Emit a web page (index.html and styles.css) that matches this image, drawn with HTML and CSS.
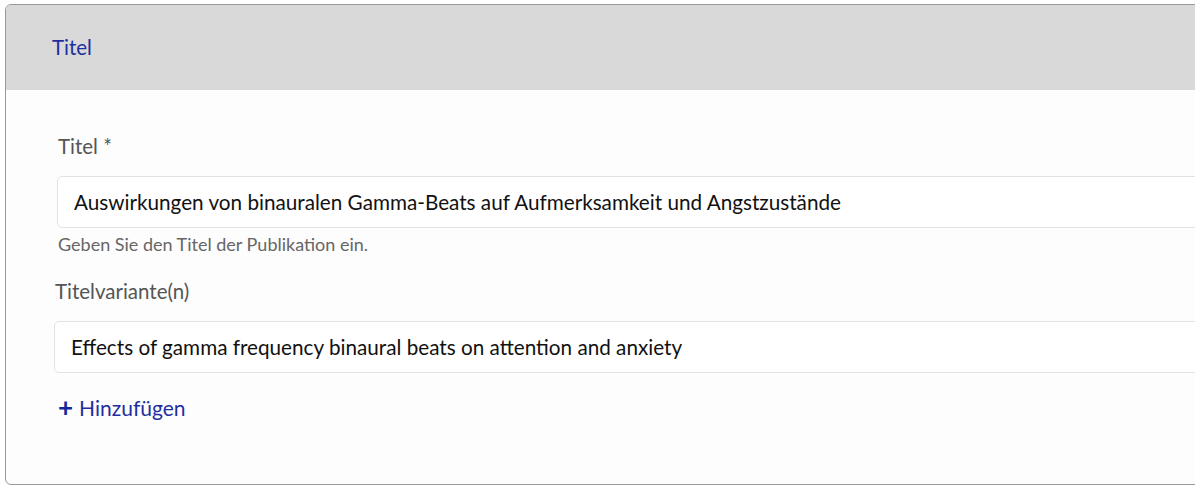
FILE: index.html
```html
<!DOCTYPE html>
<html lang="de">
  <head>
    <meta charset="UTF-8" />
    <meta name="viewport" content="width=device-width, initial-scale=1.0" />
    <title>Titel</title>
    <link rel="stylesheet" href="styles.css">
  </head>
  <body>
    <div class="card">
      <div class="card-header">Titel</div>
      <div class="card-body">
        <div class="field">
          <label class="field-label" for="titel">Titel *</label>
          <input class="field-input" id="titel" type="text" value="Auswirkungen von binauralen Gamma-Beats auf Aufmerksamkeit und Angstzustände" />
          <div class="field-help">Geben Sie den Titel der Publikation ein.</div>
        </div>
        <div class="field variants">
          <label class="field-label" for="variante">Titelvariante(n)</label>
          <input class="field-input" id="variante" type="text" value="Effects of gamma frequency binaural beats on attention and anxiety" />
          <a class="add-link" href="#"><span class="plus">+</span>Hinzufügen</a>
        </div>
      </div>
    </div>
  </body>
</html>
```

FILE: styles.css
```css
* {
  margin: 0;
  padding: 0;
  box-sizing: border-box;
}
html, body {
  height: 100%;
  overflow: hidden;
  background: #fff;
  font-family: Lato, "Noto Sans", sans-serif;
}
body {
  padding: 4px 0 0 5px;
}
.card {
  width: 1220px;
  height: 481px;
  border: 1px solid #999;
  border-radius: 6px;
  background: #fdfdfd;
  overflow: hidden;
}
.card-header {
  height: 85px;
  background: #d9d9d9;
  color: #1f2fa0;
  font-size: 20.5px;
  padding: 30px 0 0 46px;
}
.card-body {
  padding: 44px 0 0 0;
}
.field {
  display: flex;
  flex-direction: column;
  align-items: flex-start;
}
.field-label {
  color: #555;
  font-size: 20.5px;
  margin: 0 0 18px 52px;
}
.field-input {
  width: 1160px;
  height: 52px;
  margin-left: 51px;
  padding: 0 16px;
  border: 1px solid #e2e2e2;
  border-radius: 5px;
  background: #fff;
  color: #111;
  font-family: inherit;
  font-size: 20.7px;
  outline: none;
}
.field-help {
  color: #666;
  font-size: 18px;
  margin: 5px 0 0 52px;
}
.variants {
  margin-top: 24px;
}
.variants .field-label {
  margin-left: 49px;
}
.variants .field-input {
  margin-left: 48px;
}
.add-link {
  display: flex;
  align-items: center;
  color: #1f2fa0;
  font-size: 21px;
  text-decoration: none;
  margin: 21px 0 0 52px;
}
.plus {
  font-size: 26px;
  font-weight: bold;
  line-height: 1;
  margin-right: 6px;
  color: #13259a;
}
```
